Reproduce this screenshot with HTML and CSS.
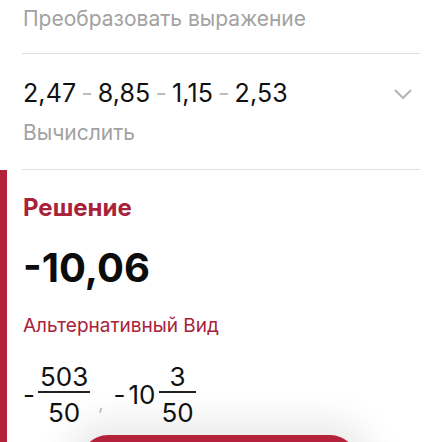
FILE: index.html
```html
<!DOCTYPE html>
<html lang="ru">
<head>
<meta charset="utf-8">
<link rel="stylesheet" href="styles.css">
</head>
<body>
<div class="page">
  <div class="top">
    <div class="muted title">Преобразовать выражение</div>
    <div class="divider"></div>
    <div class="expr-row">
      <div class="expr">2,47<span class="op">-</span>8,85<span class="op">-</span>1,15<span class="op">-</span>2,53</div>
      <svg class="chev" width="18" height="11" viewBox="0 0 18 11"><path d="M1.5 1.5 L9 9 L16.5 1.5" fill="none" stroke="#b4b4b4" stroke-width="2" stroke-linecap="round" stroke-linejoin="round"/></svg>
    </div>
    <div class="muted action">Вычислить</div>
    <div class="divider"></div>
  </div>
  <div class="solution">
    <div class="sol-title">Решение</div>
    <div class="answer">-10,06</div>
    <div class="alt-title">Альтернативный Вид</div>
    <div class="alt">
      <span class="sign">-</span>
      <span class="frac"><span class="num">503</span><span class="bar"></span><span class="den">50</span></span>
      <span class="comma">,</span>
      <span class="sign">-</span><span class="whole">10</span>
      <span class="frac"><span class="num">3</span><span class="bar"></span><span class="den">50</span></span>
    </div>
  </div>
  <div class="fab"></div>
</div>
</body>
</html>
```
FILE: styles.css
```css
html, body {
  margin: 0;
  padding: 0;
  background: #ffffff;
}
body {
  font-family: Inter, "Noto Sans", sans-serif;
  color: #111111;
  overflow: hidden;
}
.page {
  position: relative;
  width: 442px;
  height: 442px;
  overflow: hidden;
}
.top {
  padding: 5px 22px 0 23px;
}
.muted {
  color: #a2a2a2;
  font-size: 21px;
  line-height: 28px;
}
.title {
  margin-bottom: 20px;
}
.divider {
  height: 1px;
  background: #dedede;
  margin-left: -1px;
}
.expr-row {
  display: flex;
  align-items: center;
  justify-content: space-between;
  margin-top: 24px;
  padding-right: 8px;
}
.expr {
  font-size: 25px;
  line-height: 30px;
  color: #111111;
  letter-spacing: 0.1px;
}
.op {
  color: #bcbcbc;
  margin: 0 5px;
}
.chev {
  display: block;
  margin-top: 2px;
}
.action {
  margin-top: 11px;
  margin-bottom: 22px;
}
.solution {
  border-left: 7px solid #b3213a;
  padding: 24px 0 0 16px;
  height: 272px;
  box-sizing: border-box;
}
.sol-title {
  color: #a8223a;
  font-weight: 700;
  font-size: 24px;
  line-height: 28px;
}
.answer {
  margin-top: 22px;
  font-weight: 700;
  font-size: 40px;
  line-height: 48px;
  color: #0c0c0c;
}
.alt-title {
  margin-top: 22px;
  color: #a8223a;
  font-size: 19px;
  line-height: 24px;
}
.alt {
  margin-top: 26px;
  display: flex;
  align-items: center;
  font-size: 26px;
  color: #111111;
}
.sign {
  line-height: 26px;
  margin-right: 3px;
}
.frac {
  display: inline-flex;
  flex-direction: column;
  align-items: center;
}
.num, .den {
  line-height: 26px;
  padding: 0 2px;
}
.num {
  margin-bottom: 1px;
}
.den {
  margin-top: 7px;
}
.bar {
  align-self: stretch;
  height: 1.5px;
  background: #222222;
}
.comma {
  color: #bdbdbd;
  font-size: 18px;
  margin: 18px 10px 0 8px;
}
.whole {
  line-height: 26px;
  margin-right: 4px;
}
.fab {
  position: absolute;
  left: 80px;
  top: 435px;
  width: 278px;
  height: 56px;
  border-radius: 28px;
  background: #b3213a;
  box-shadow: 0 0 36px 14px rgba(0, 0, 0, 0.09);
}
```
